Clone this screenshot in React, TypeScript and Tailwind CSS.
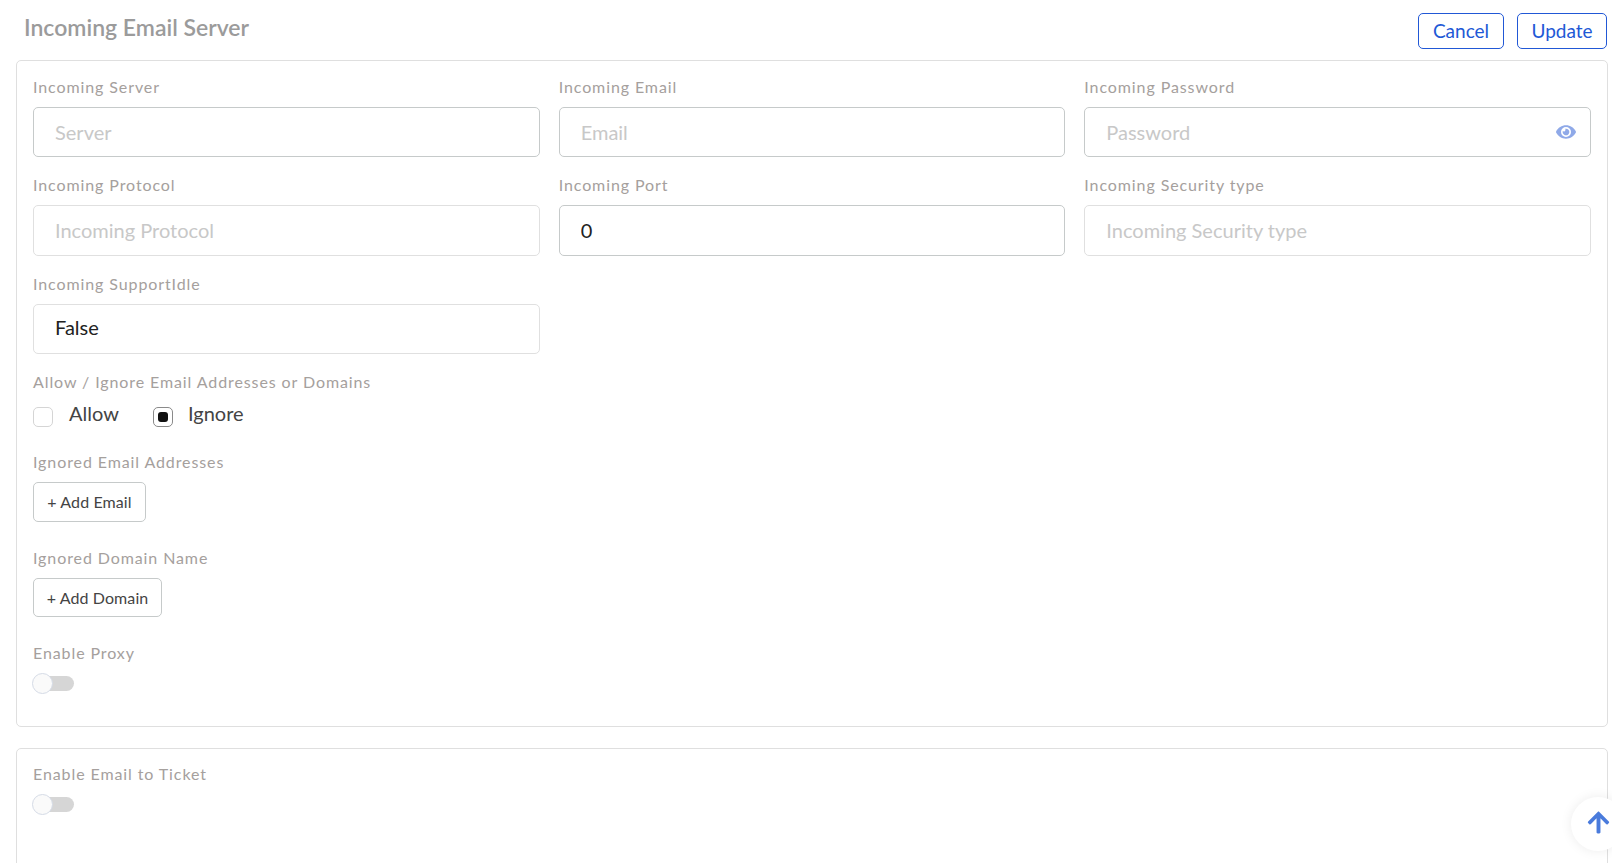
import { FaArrowUp, FaEye } from 'react-icons/fa';

const FieldLabel = ({ children }: { children: string }) => (
  <label className="block h-5 -translate-y-px text-[16px] leading-5 tracking-[0.9px] text-[#a5a09d]">{children}</label>
);

const Field = ({
  label,
  placeholder,
  value,
  light,
  h,
  eye,
}: {
  label: string;
  placeholder?: string;
  value?: string;
  light?: boolean;
  h: string;
  eye?: boolean;
}) => (
  <div>
    <FieldLabel>{label}</FieldLabel>
    <div className="relative mt-[9px]">
      <input
        readOnly
        placeholder={placeholder}
        value={value}
        className={`block w-full rounded-[5px] border bg-white pl-[21px] pr-4 text-[20px] text-[#222] outline-none placeholder:text-[#c8c8c8] ${h} ${
          light ? 'border-[#e0e0e0]' : 'border-[#c6caca]'
        }`}
      />
      {eye && <FaEye className="absolute right-[15px] top-[15px] text-[20px] text-[#8fa9e8]" />}
    </div>
  </div>
);

const Toggle = () => (
  <div className="relative h-[21px] w-[42px]">
    <div className="absolute left-[1px] top-[3px] h-[15px] w-[41px] rounded-full bg-[#d6d6d6]" />
    <div className="absolute left-0 top-0 h-[21px] w-[21px] rounded-full border border-[#d5dbe6] bg-[#fafafa]" />
  </div>
);

const AddButton = ({ children, className }: { children: string; className: string }) => (
  <button className={`mt-[9px] block rounded-[5px] border border-[#c6caca] bg-white text-center text-[16px] tracking-[0.1px] text-[#444] ${className}`}>
    {children}
  </button>
);

export default function App() {
  return (
    <div className="relative h-[863px] overflow-hidden bg-white font-['Lato','Liberation_Sans',sans-serif]">
      <div className="flex h-[60px] items-start justify-between pl-6 pr-[5px]">
        <h1 className="mt-[13px] text-[23px] leading-7 font-semibold text-[#9b9b9b]">Incoming Email Server</h1>
        <div className="mt-[13px] flex gap-[13px]">
          <button className="h-9 w-[86px] rounded-[5px] border border-[#2158d6] text-[19px] text-[#2158d6]">Cancel</button>
          <button className="h-9 w-[90px] rounded-[5px] border border-[#2158d6] text-[19px] text-[#2158d6]">Update</button>
        </div>
      </div>

      <section className="ml-4 mr-1 h-[667px] rounded-[5px] border border-[#dfdfdf] px-4 pt-[17px]">
        <div className="grid grid-cols-3 gap-x-[19px] gap-y-[19px]">
          <Field label="Incoming Server" placeholder="Server" h="h-[50px]" />
          <Field label="Incoming Email" placeholder="Email" h="h-[50px]" />
          <Field label="Incoming Password" placeholder="Password" h="h-[50px]" eye />
          <Field label="Incoming Protocol" placeholder="Incoming Protocol" h="h-[51px] pb-[2px]" light />
          <Field label="Incoming Port" value="0" h="h-[51px] pb-[2px]" />
          <Field label="Incoming Security type" placeholder="Incoming Security type" h="h-[51px] pb-[2px]" light />
          <Field label="Incoming SupportIdle" value="False" h="h-[50px] pb-[5px]" light />
        </div>

        <div className="mt-[19px]">
          <FieldLabel>Allow / Ignore Email Addresses or Domains</FieldLabel>
          <div className="mt-[14px] flex h-5 items-center text-[20px] text-[#444]">
            <span className="h-5 w-5 rounded-[5px] border border-[#d5d5d5] bg-white" />
            <span className="ml-4 w-[84px] -translate-y-[4px]">Allow</span>
            <span className="flex h-5 w-5 items-center justify-center rounded-[5px] border border-[#8a8a8a] bg-white">
              <span className="h-[10px] w-[10px] rounded-[3px] bg-[#111]" />
            </span>
            <span className="ml-[15px] -translate-y-[4px]">Ignore</span>
          </div>
        </div>

        <div className="mt-[26px]">
          <FieldLabel>Ignored Email Addresses</FieldLabel>
          <AddButton className="h-10 w-[113px]">+ Add Email</AddButton>
        </div>

        <div className="mt-[27px]">
          <FieldLabel>Ignored Domain Name</FieldLabel>
          <AddButton className="h-[39px] w-[129px]">+ Add Domain</AddButton>
        </div>

        <div className="mt-[27px]">
          <FieldLabel>Enable Proxy</FieldLabel>
          <div className="mt-[9px] -ml-[1px]">
            <Toggle />
          </div>
        </div>
      </section>

      <section className="ml-4 mr-1 mt-[21px] h-[200px] rounded-[5px] border border-[#dfdfdf] px-4 pt-4">
        <FieldLabel>Enable Email to Ticket</FieldLabel>
        <div className="mt-[9px] -ml-[1px]">
          <Toggle />
        </div>
      </section>

      <button className="fixed left-[1571px] top-[797px] flex h-[54px] w-[54px] items-center justify-center rounded-full bg-white pb-1 shadow-[0_0_12px_rgba(0,0,0,0.08)]">
        <FaArrowUp className="text-[25px] text-[#4a7bdc]" />
      </button>
    </div>
  );
}
